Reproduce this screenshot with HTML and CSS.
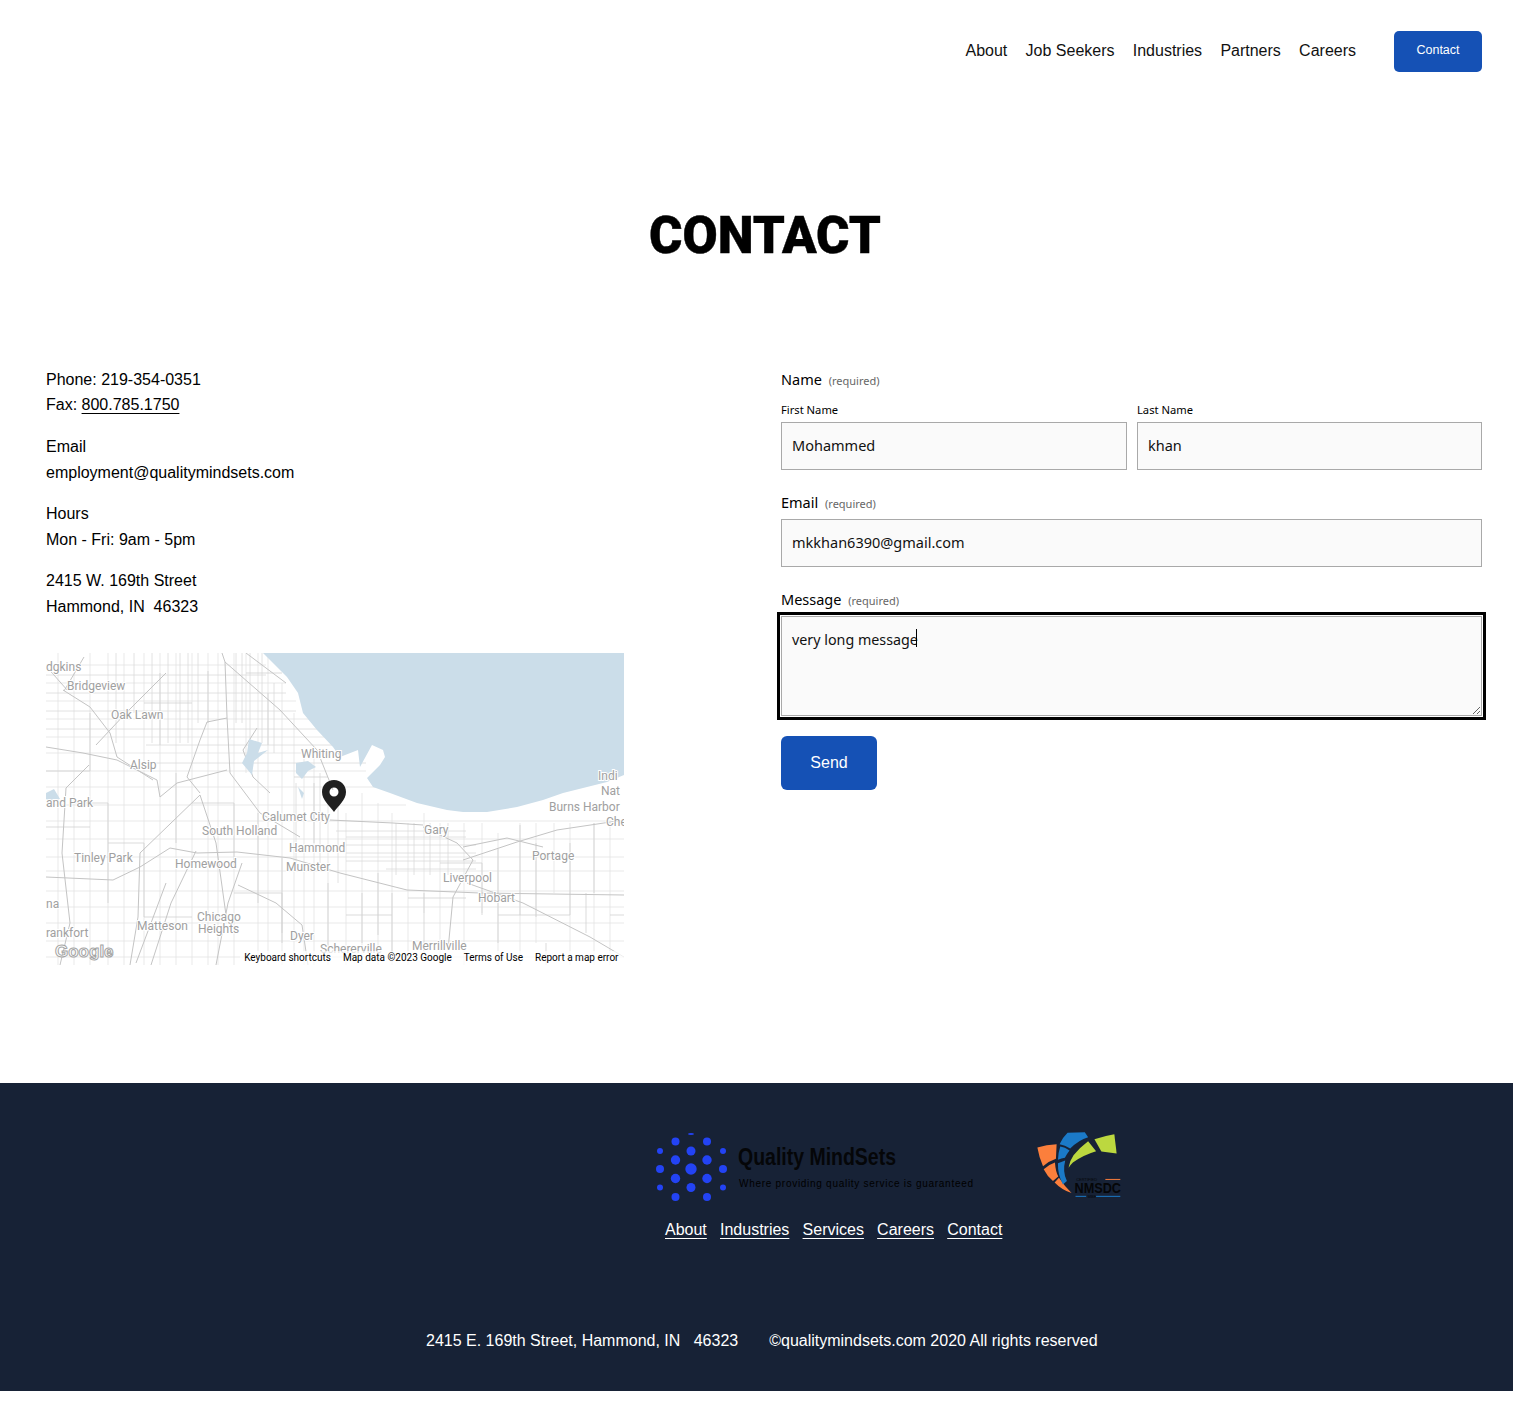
FILE: index.html
```html
<!DOCTYPE html>
<html lang="en">
<head>
  <meta charset="UTF-8">
  <meta name="viewport" content="width=device-width, initial-scale=1.0">
  <title>Contact</title>
  <link rel="stylesheet" href="styles.css">
</head>
<body>
  <header class="site-header">
    <nav class="main-nav">
      <a href="#">About</a>
      <a href="#">Job Seekers</a>
      <a href="#">Industries</a>
      <a href="#">Partners</a>
      <a href="#">Careers</a>
    </nav>
    <a href="#" class="nav-button">Contact</a>
  </header>

  <h1 class="page-title">CONTACT</h1>

  <main class="contact-grid">
    <!-- left column -->
    <section class="contact-info">
      <p>Phone: 219-354-0351<br>Fax: <a href="#">800.785.1750</a></p>
      <p>Email<br>employment@qualitymindsets.com</p>
      <p>Hours<br>Mon - Fri: 9am - 5pm</p>
      <p>2415 W. 169th Street<br>Hammond, IN&nbsp; 46323</p>

      <div class="map">
        <svg class="map-svg" viewBox="0 0 578 312" width="578" height="312" aria-label="Map">
          <rect width="578" height="312" fill="#fff"/>
          <!-- minor streets -->
          <path class="road-light" d="M12 0V312M28 20V312M44 0V312M62 0V312M78 0V312M98 0V312M114 0V312M130 0V312M146 0V312M162 0V312M172 0V312M188 0V312M200 0V120M212 0V312M222 0V312M236 30V312M248 60V312M258 100V312M268 100V312M282 130V312M300 160V312M316 140V312M332 150V312M346 160V312M362 170V312M378 160V260M394 170V312M418 170V312M436 170V260M452 180V312M474 170V312M490 170V290M508 170V240M524 170V312M548 170V312M564 170V312"/>
          <path class="road-light" d="M0 12H220M0 30H240M0 48H250M0 66H270M0 84H290M0 100H300M0 118H320M0 134H340M0 152H360M0 168H578M0 186H578M0 204H578M0 218H578M0 238H578M0 254H578M0 270H578M0 288H578M0 304H578"/>
          <path class="road-grid" d="M70 0V90M88 0V60M106 0V90M122 0V90M134 0V90M142 0V90M152 0V70M190 0V70M196 0V70M204 0V90M216 0V90M228 30V100M0 22H220M0 40H240M0 58H250M0 76H280M100 92H290M100 110H320M290 178H420M300 184H420M300 192H430M300 200H430M300 208H430M340 216H430M350 170V222M368 170V222M384 170V222M402 170V222M250 130V210M274 120V210M292 150V230"/>
          <!-- secondary roads -->
          <path class="road-mid" d="M28 150H62V250M62 190H98V264M0 174H44M98 264H146M130 120V190M146 150H188V210M212 160V250M236 205V280M188 240H236V290M282 230V300M316 240V290M332 220V282M346 240V300M378 240V300M362 245H420M394 210H436V262M452 196V290M490 190V264M474 172V262M524 190V262M548 170V240M452 262H524M300 262H346M500 290V312M540 240V280M564 262H578M0 118H44M44 60V118M98 50H146M114 20V92M162 18V70M200 20H236M222 40V92M248 124H282M268 130V190"/>
          <!-- main roads -->
          <path class="road-main" d="M176 0L179 9L234 57L271 97L287 137M179 9L181 64L184 120M181 65L161 69L154 87L141 124L154 140M154 142L94 200L92 264L84 312M0 224L67 227L94 214L124 195L151 200L191 199L244 205L294 220L361 237L434 240L578 242M0 94L37 100L71 107L111 127L114 144L131 130L181 117M17 37L44 54L64 80L71 104L107 127M43 112L20 135L16 200L24 270L14 312M417 207L471 189L511 177L578 167M421 230L477 250L544 284L578 304M377 174L411 190L427 207L407 244L402 297M284 167L347 170L377 172M417 194L461 185L497 194M211 75L197 97L207 124L224 140M184 120L214 160L254 184M154 142L170 190L180 262M196 210L182 250L170 312M192 232L230 250L256 272L262 312M0 13L22 38M38 4L18 38M120 20L80 60L50 92M120 230L90 310M150 198L125 250L105 312M240 30L200 0"/>
          <!-- water -->
          <path class="water" d="M217 0L241 24L252 40L257 60L271 77L287 94L294 104L312 97L314 114L326 92L337 97L339 104L334 112L321 125L327 134L344 140L371 150L401 157L417 159L441 159L471 154L497 147L517 140L541 134L561 129L578 122V0Z"/>
          <path class="water" d="M203 86L216 90L212 100L222 97L208 108L206 122L196 110L201 100ZM250 110L262 108L270 114L262 118L256 126L250 120ZM0 140L8 136L14 146L4 148L0 146ZM252 134L258 140L256 146Z"/>
          <g class="map-labels">
            <text x="0" y="18">dgkins</text>
            <text x="21" y="37">Bridgeview</text>
            <text x="65" y="66">Oak Lawn</text>
            <text x="84" y="116">Alsip</text>
            <text x="0" y="154">and Park</text>
            <text x="216" y="168">Calumet City</text>
            <text x="156" y="182">South Holland</text>
            <text x="243" y="199">Hammond</text>
            <text x="240" y="218">Munster</text>
            <text x="28" y="209">Tinley Park</text>
            <text x="129" y="215">Homewood</text>
            <text x="255" y="105">Whiting</text>
            <text x="378" y="181">Gary</text>
            <text x="486" y="207">Portage</text>
            <text x="397" y="229">Liverpool</text>
            <text x="432" y="249">Hobart</text>
            <text x="503" y="158">Burns Harbor</text>
            <text x="552" y="127">Indi</text>
            <text x="555" y="142">Nat</text>
            <text x="560" y="173">Che</text>
            <text x="0" y="255">na</text>
            <text x="0" y="284">rankfort</text>
            <text x="91" y="277">Matteson</text>
            <text x="151" y="268">Chicago</text>
            <text x="152" y="280">Heights</text>
            <text x="244" y="287">Dyer</text>
            <text x="274" y="300">Schererville</text>
            <text x="366" y="297">Merrillville</text>
          </g>
          <text class="map-google" x="9" y="304">Google</text>
          <path class="map-pin" d="M288 127C281 127 276 132 276 139C276 147 284 153 288 159C292 153 300 147 300 139C300 132 295 127 288 127ZM288 143.500A4.500 4.500 0 1 1 288 134.500A4.500 4.500 0 0 1 288 143.500Z"/>
        </svg>
        <div class="map-attribution">
          <span>Keyboard shortcuts</span>
          <span>Map data ©2023 Google</span>
          <span>Terms of Use</span>
          <span>Report a map error</span>
        </div>
      </div>
    </section>

    <!-- right column -->
    <form class="contact-form">
      <div class="field-label">Name <small>(required)</small></div>
      <div class="name-row">
        <label>First Name
          <input type="text" value="Mohammed">
        </label>
        <label>Last Name
          <input type="text" value="khan">
        </label>
      </div>

      <div class="field-label">Email <small>(required)</small></div>
      <input type="text" value="mkkhan6390@gmail.com">

      <div class="field-label">Message <small>(required)</small></div>
      <div class="message-box">
        <textarea>very long message</textarea>
        <span class="caret"></span>
      </div>

      <button type="button" class="send-button">Send</button>
    </form>
  </main>

  <footer class="site-footer">
    <div class="footer-logos">
      <svg class="logo-main" viewBox="0 0 330 72" width="330" height="72" aria-label="Quality MindSets">
        <g fill="#2343f5">
          <ellipse cx="41" cy="2" rx="3" ry="1"/>
          <circle cx="25.500" cy="9.500" r="4"/><circle cx="57" cy="9.500" r="4"/>
          <circle cx="10" cy="19" r="3"/><circle cx="41" cy="19" r="4.500"/><circle cx="73" cy="19" r="3"/>
          <circle cx="25.500" cy="28" r="4.700"/><circle cx="57" cy="28" r="4.700"/>
          <circle cx="10" cy="37" r="4"/><circle cx="41" cy="37" r="5.700"/><circle cx="73" cy="37" r="4"/>
          <circle cx="25.500" cy="46.500" r="4.700"/><circle cx="57" cy="46.500" r="4.700"/>
          <circle cx="10" cy="55.500" r="3"/><circle cx="41" cy="55.500" r="4.500"/><circle cx="73" cy="55.500" r="3"/>
          <circle cx="25.500" cy="65" r="4"/><circle cx="57" cy="65" r="4"/>
        </g>
        <text class="logo-name" x="88" y="33" textLength="158" lengthAdjust="spacingAndGlyphs">Quality MindSets</text>
        <text class="logo-tag" x="89" y="55" textLength="234" lengthAdjust="spacing">Where providing quality service is guaranteed</text>
      </svg>
      <svg class="logo-nmsdc" viewBox="1190 35 260 205" width="87" height="68" aria-label="Certified NMSDC MBE">
        <g fill="#fb7f3c">
          <path d="M1193 85Q1220 76 1251 75L1249 119Q1228 126 1210 141Q1198 115 1193 85Z"/>
          <path d="M1212 150Q1228 136 1246 130Q1248 158 1256 172L1240 186Q1222 170 1212 150Z"/>
          <path d="M1245 190L1258 176Q1274 200 1296 222Q1266 212 1245 190Z"/>
        </g>
        <g fill="#1b7ac8">
          <path d="M1260 75Q1268 55 1284 40L1336 39L1346 54Q1318 62 1292 88Q1276 78 1260 75Z"/>
          <path d="M1255 122Q1256 100 1262 82Q1276 84 1290 94Q1282 104 1276 116Q1266 118 1255 122Z"/>
          <path d="M1255 132L1277 124Q1268 158 1282 186L1270 196Q1254 166 1255 132Z"/>
        </g>
        <g fill="#bcd83f">
          <path d="M1287 146Q1290 125 1302 108Q1322 84 1346 66L1370 96Q1330 108 1300 130Q1292 138 1287 146Z"/>
          <path d="M1365 60Q1395 50 1425 45L1432 103L1386 97Z"/>
        </g>
        <text class="nmsdc-small" x="1310" y="185">CERTIFIED</text>
        <path d="M1398 181H1443" stroke="#fb7f3c" stroke-width="3"/>
        <text class="nmsdc-name" x="1305" y="222" textLength="140" lengthAdjust="spacingAndGlyphs">NMSDC</text>
        <path d="M1308 232H1340M1370 232H1443" stroke="#1b7ac8" stroke-width="3"/>
        <text class="nmsdc-small" x="1344" y="238">MBE</text>
      </svg>
    </div>
    <nav class="footer-nav">
      <a href="#">About</a>
      <a href="#">Industries</a>
      <a href="#">Services</a>
      <a href="#">Careers</a>
      <a href="#">Contact</a>
    </nav>
    <p class="footer-bottom"><span>2415 E. 169th Street, Hammond, IN&nbsp;&nbsp; 46323</span><span>©qualitymindsets.com 2020 All rights reserved</span></p>
  </footer>
</body>
</html>
```

FILE: styles.css
```css
/* base */
body {
  margin: 0;
  padding-bottom: 32px;
  background-color: #fff;
  color: #000;
  font-family: "Liberation Sans", Arial, sans-serif;
  font-size: 16px;
}

a {
  color: inherit;
}

/* header */
.site-header {
  display: flex;
  justify-content: flex-end;
  align-items: center;
  height: 103px;
  padding-right: 31px;
}

.main-nav {
  display: flex;
  gap: 18.250px;
  margin-right: 38px;
  padding-bottom: 2px;
}

.main-nav a {
  text-decoration: none;
  color: #111;
}

.nav-button {
  display: block;
  width: 88px;
  height: 41px;
  line-height: 39px;
  text-align: center;
  background-color: #1551b5;
  color: #fff;
  border-radius: 5px;
  font-size: 12.500px;
  text-decoration: none;
}

/* title */
.page-title {
  margin: 0;
  padding: 103px 0 0 17px;
  height: 59px;
  text-align: center;
  font-family: Roboto, "Liberation Sans", sans-serif;
  font-size: 51px;
  font-weight: 900;
  line-height: 60px;
  -webkit-text-stroke: 0.400px #000;
}

/* two columns */
.contact-grid {
  display: grid;
  grid-template-columns: 578px 701px;
  justify-content: space-between;
  padding: 99.750px 31px 0 46px;
  height: 816px;
  box-sizing: border-box;
  margin-top: 2px;
}

.contact-info p {
  margin: 0 0 16px;
  line-height: 25.600px;
}

.contact-info a {
  text-decoration: underline;
  text-underline-offset: 3px;
  text-decoration-thickness: 1px;
}

/* map */
.map {
  position: relative;
  width: 578px;
  height: 312px;
  margin-top: 33.450px;
  overflow: hidden;
}

.map-svg {
  display: block;
}

.road-light {
  fill: none;
  stroke: #e3e3e3;
  stroke-width: 0.800;
}

.road-grid {
  fill: none;
  stroke: #dadada;
  stroke-width: 0.800;
}

.road-mid {
  fill: none;
  stroke: #d2d2d2;
  stroke-width: 0.800;
}

.road-main {
  fill: none;
  stroke: #c4c4c4;
  stroke-width: 1;
}

.water {
  fill: #cbdde9;
}

.map-labels text {
  font-family: Roboto, sans-serif;
  font-size: 12px;
  fill: #a0a0a0;
  paint-order: stroke;
  stroke: #fff;
  stroke-width: 2px;
}

.map-google {
  font-family: "Liberation Sans", sans-serif;
  font-size: 17px;
  font-weight: 700;
  fill: #fff;
  stroke: #a4a4a4;
  stroke-width: 1px;
}

.map-pin {
  fill: #1f1f1f;
  fill-rule: evenodd;
}

.map-attribution {
  position: absolute;
  right: 0;
  bottom: 0;
  display: flex;
  gap: 12px;
  padding: 0 5.500px 0 4px;
  height: 14px;
  line-height: 14px;
  background-color: rgba(255, 255, 255, 0.7);
  font-family: Roboto, sans-serif;
  font-size: 10px;
  white-space: nowrap;
}

/* form */
.contact-form {
  font-family: "Noto Sans", sans-serif;
  padding-top: 2px;
}

.contact-form input,
.contact-form textarea {
  display: block;
  box-sizing: border-box;
  width: 100%;
  margin: 0;
  padding: 0 10px;
  border: 1px solid #a9a9a9;
  border-radius: 0;
  background-color: #fafafa;
  color: #111;
  font-family: "Noto Sans", sans-serif;
  font-size: 14.500px;
}

.contact-form input {
  height: 48px;
  padding-bottom: 2px;
}

.field-label {
  font-size: 14.500px;
  line-height: 20px;
  margin-bottom: 7px;
}

.field-label small {
  margin-left: 3px;
  font-size: 11px;
  color: #666;
}

.name-row {
  display: grid;
  grid-template-columns: 346px 345px;
  gap: 10px;
  margin-top: 10px;
  margin-bottom: 22px;
}

.name-row label {
  display: block;
  font-size: 11.200px;
  line-height: 18px;
}

.name-row input {
  margin-top: 3px;
}

.contact-form > input {
  margin-bottom: 22px;
  margin-top: -2px;
}

.message-box {
  position: relative;
  margin-top: -2px;
}

.contact-form textarea {
  height: 100px;
  padding-top: 12px;
  padding-bottom: 10px;
  font-size: 14.300px;
  line-height: 22px;
  outline: 3px solid #000;
  outline-offset: 1px;
}

.caret {
  position: absolute;
  left: 135px;
  top: 13px;
  width: 1px;
  height: 18px;
  background-color: #000;
}

.send-button {
  display: block;
  width: 96px;
  height: 54px;
  margin-top: 20px;
  border: none;
  border-radius: 6px;
  background-color: #1551b5;
  color: #fff;
  font-family: "Liberation Sans", sans-serif;
  font-size: 16px;
}

/* footer */
.site-footer {
  height: 308px;
  box-sizing: border-box;
  padding-top: 49px;
  background-color: #172236;
  color: #fff;
}

.footer-logos {
  display: flex;
  align-items: flex-start;
  padding-left: 650px;
}

.logo-main {
  display: block;
}

.logo-nmsdc {
  display: block;
  margin-left: 56px;
  margin-top: -1px;
}

.logo-name {
  font-family: "Liberation Sans", sans-serif;
  font-size: 24px;
  font-weight: 700;
  fill: #050608;
}

.logo-tag {
  font-family: "Liberation Sans", sans-serif;
  font-size: 10px;
  fill: #000;
}

.nmsdc-name {
  font-family: "Liberation Sans", sans-serif;
  font-size: 46px;
  font-weight: 700;
  fill: #050608;
}

.nmsdc-small {
  font-family: "Liberation Sans", sans-serif;
  font-size: 12px;
  fill: #050608;
}

.footer-nav {
  display: flex;
  gap: 13.200px;
  padding-left: 665px;
  margin-top: 13px;
  line-height: 26px;
}

.footer-nav a {
  text-underline-offset: 3px;
  text-decoration-thickness: 1px;
}

.footer-bottom {
  display: flex;
  gap: 31px;
  margin: 85px 0 0 426px;
  line-height: 26px;
}
```
